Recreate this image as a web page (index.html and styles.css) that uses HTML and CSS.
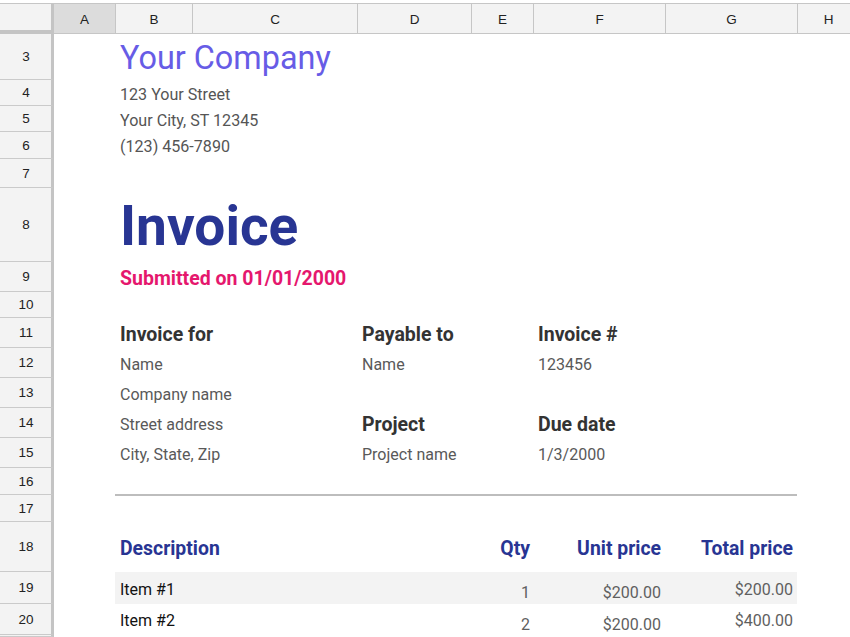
FILE: index.html
```html
<!DOCTYPE html>
<html lang="en">
<head>
<meta charset="utf-8">
<title>Invoice</title>
<link rel="stylesheet" href="styles.css">
</head>
<body>
<div class="sheet">
  <div class="topstrip"></div>

  <div class="corner"></div>
  <div class="colhdr sel">A</div>
  <div class="colhdr">B</div>
  <div class="colhdr">C</div>
  <div class="colhdr">D</div>
  <div class="colhdr">E</div>
  <div class="colhdr">F</div>
  <div class="colhdr">G</div>
  <div class="colhdr">H</div>

  <div class="rowhdr r3">3</div>
  <div class="rowhdr r4">4</div>
  <div class="rowhdr r5">5</div>
  <div class="rowhdr r6">6</div>
  <div class="rowhdr r7">7</div>
  <div class="rowhdr r8">8</div>
  <div class="rowhdr r9">9</div>
  <div class="rowhdr r10">10</div>
  <div class="rowhdr r11">11</div>
  <div class="rowhdr r12">12</div>
  <div class="rowhdr r13">13</div>
  <div class="rowhdr r14">14</div>
  <div class="rowhdr r15">15</div>
  <div class="rowhdr r16">16</div>
  <div class="rowhdr r17">17</div>
  <div class="rowhdr r18">18</div>
  <div class="rowhdr r19">19</div>
  <div class="rowhdr r20">20</div>
  <div class="rowhdr r21"></div>

  <div class="cell wide r3 company">Your Company</div>
  <div class="cell wide r4 addr">123 Your Street</div>
  <div class="cell wide r5 addr">Your City, ST 12345</div>
  <div class="cell wide r6 addr">(123) 456-7890</div>

  <div class="cell wide r8 title">Invoice</div>
  <div class="cell wide r9 submitted">Submitted on 01/01/2000</div>

  <div class="cell colB r11 label">Invoice for</div>
  <div class="cell colD r11 label">Payable to</div>
  <div class="cell colF r11 label">Invoice #</div>

  <div class="cell colB r12 value">Name</div>
  <div class="cell colD r12 value">Name</div>
  <div class="cell colF r12 value">123456</div>

  <div class="cell colB r13 value">Company name</div>

  <div class="cell colB r14 value">Street address</div>
  <div class="cell colD r14 label">Project</div>
  <div class="cell colF r14 label">Due date</div>

  <div class="cell colB r15 value">City, State, Zip</div>
  <div class="cell colD r15 value">Project name</div>
  <div class="cell colF r15 value">1/3/2000</div>

  <div class="divider r17"></div>

  <div class="cell colB r18 thead">Description</div>
  <div class="cell colE r18 thead right">Qty</div>
  <div class="cell colF r18 thead right">Unit price</div>
  <div class="cell colG r18 thead right">Total price</div>

  <div class="shade r19"></div>
  <div class="cell colB r19 item">Item #1</div>
  <div class="cell colE r19 num right low">1</div>
  <div class="cell colF r19 num right low">$200.00</div>
  <div class="cell colG r19 num right">$200.00</div>

  <div class="cell colB r20 item">Item #2</div>
  <div class="cell colE r20 num right low">2</div>
  <div class="cell colF r20 num right low">$200.00</div>
  <div class="cell colG r20 num right">$400.00</div>
</div>
</body>
</html>
```

FILE: styles.css
```css
html, body {
  margin: 0;
  padding: 0;
  background: #ffffff;
  overflow: hidden;
}

.sheet {
  width: 859px;
  height: 637px;
  display: grid;
  grid-template-columns: 54px 61px 77px 165px 114px 62px 132px 132px 62px;
  grid-template-rows: 4px 30px 46px 26px 26px 27px 29px 74px 30px 26px 30px 30px 30px 30px 30px 27px 27px 50px 32px 31px 1fr;
  font-family: Roboto, "Liberation Sans", Arial, sans-serif;
  overflow: hidden;
}

.topstrip {
  grid-row: 1;
  grid-column: 1 / -1;
  background: #ffffff;
  border-bottom: 1px solid #c6c6c6;
}

.corner {
  grid-row: 2;
  grid-column: 1;
  background: #f3f3f3;
  border-right: 3px solid #c4c4c4;
  border-bottom: 4px solid #c4c4c4;
}

.colhdr {
  grid-row: 2;
  background: #f3f3f3;
  border-left: 1px solid #c6c6c6;
  border-bottom: 1px solid #c6c6c6;
  font-family: "Liberation Sans", Arial, sans-serif;
  font-size: 13.5px;
  color: #222;
  display: flex;
  align-items: center;
  justify-content: center;
  padding-top: 1px;
}

.colhdr.sel {
  background: #dcdcdc;
  border-left: none;
}

.rowhdr {
  grid-column: 1;
  background: #f3f3f3;
  border-right: 3px solid #c4c4c4;
  border-bottom: 1px solid #cacaca;
  font-family: "Liberation Sans", Arial, sans-serif;
  font-size: 13.5px;
  color: #222;
  display: flex;
  align-items: center;
  justify-content: center;
  padding-left: 1px;
}

.r3 { grid-row: 3; }
.r4 { grid-row: 4; }
.r5 { grid-row: 5; }
.r6 { grid-row: 6; }
.r7 { grid-row: 7; }
.r8 { grid-row: 8; }
.r9 { grid-row: 9; }
.r10 { grid-row: 10; }
.r11 { grid-row: 11; }
.r12 { grid-row: 12; }
.r13 { grid-row: 13; }
.r14 { grid-row: 14; }
.r15 { grid-row: 15; }
.r16 { grid-row: 16; }
.r17 { grid-row: 17; }
.r18 { grid-row: 18; }
.r19 { grid-row: 19; }
.r20 { grid-row: 20; }
.r21 { grid-row: 21; }

.cell {
  display: flex;
  align-items: center;
  white-space: nowrap;
  padding: 2px 0 0 5px;
  min-width: 0;
}

.wide { grid-column: 3 / -1; }
.colB { grid-column: 3 / 5; }
.colD { grid-column: 5 / 7; }
.colE { grid-column: 6 / 7; }
.colF { grid-column: 7 / 8; }
.colG { grid-column: 8 / 9; }

.right {
  justify-content: flex-end;
  padding-left: 0;
  padding-right: 4px;
}
.colE.right { padding-right: 3px; }

.company {
  font-size: 32.4px;
  color: #675ce6;
}

.addr {
  font-size: 16.1px;
  color: #555555;
}

.title {
  font-size: 55px;
  font-weight: 700;
  color: #283593;
}

.submitted {
  font-size: 19.5px;
  font-weight: 700;
  color: #e5176d;
}

.label {
  font-size: 19.5px;
  font-weight: 700;
  color: #333333;
}

.value {
  font-size: 16px;
  color: #595959;
}

.divider {
  grid-column: 3 / 9;
  align-self: start;
  height: 2px;
  margin-top: -1px;
  background: #bdbdbd;
}

.thead {
  font-size: 19.4px;
  font-weight: 700;
  color: #283593;
}

.shade {
  grid-column: 3 / 9;
  background: #f3f3f3;
}

.item {
  font-size: 16px;
  color: #111111;
}

.num {
  font-size: 16px;
  color: #5f5f5f;
}

.num.low {
  padding-top: 9px;
}
```
